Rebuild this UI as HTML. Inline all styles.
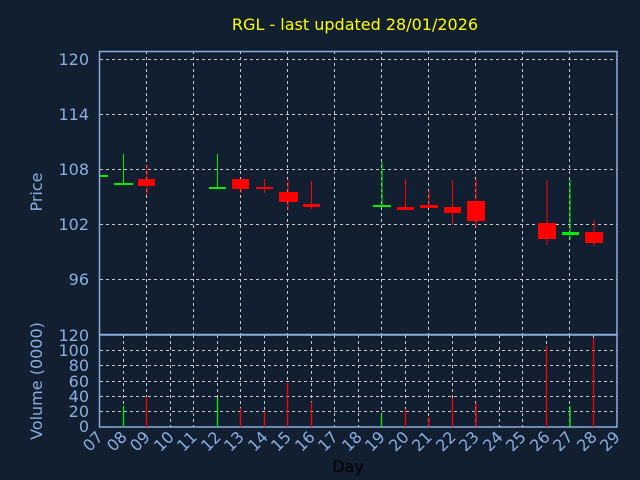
<!DOCTYPE html><html><head><style>html,body{margin:0;padding:0;background:#111f30;overflow:hidden;width:640px;height:480px}svg{display:block}</style></head><body>
<svg width="640" height="480" xmlns="http://www.w3.org/2000/svg" font-family="DejaVu Sans, sans-serif">
<rect width="640" height="480" fill="#111f30"/>
<text x="355" y="30" fill="#ffff00" font-size="16" text-anchor="middle">RGL - last updated 28/01/2026</text>
<g stroke="#c8c8c8" stroke-dasharray="3,3" stroke-width="1">
<line x1="100" x2="617" y1="59.5" y2="59.5"/><line x1="100" x2="617" y1="114.5" y2="114.5"/><line x1="100" x2="617" y1="169.5" y2="169.5"/><line x1="100" x2="617" y1="224.5" y2="224.5"/><line x1="100" x2="617" y1="279.5" y2="279.5"/>
<line x1="146.5" x2="146.5" y1="51" y2="334"/><line x1="193.5" x2="193.5" y1="51" y2="334"/><line x1="240.5" x2="240.5" y1="51" y2="334"/><line x1="287.5" x2="287.5" y1="51" y2="334"/><line x1="334.5" x2="334.5" y1="51" y2="334"/><line x1="381.5" x2="381.5" y1="51" y2="334"/><line x1="428.5" x2="428.5" y1="51" y2="334"/><line x1="475.5" x2="475.5" y1="51" y2="334"/><line x1="522.5" x2="522.5" y1="51" y2="334"/><line x1="569.5" x2="569.5" y1="51" y2="334"/>
<line x1="100" x2="617" y1="350.5" y2="350.5"/><line x1="100" x2="617" y1="365.5" y2="365.5"/><line x1="100" x2="617" y1="381.5" y2="381.5"/><line x1="100" x2="617" y1="396.5" y2="396.5"/><line x1="100" x2="617" y1="411.5" y2="411.5"/>
<line x1="123.5" x2="123.5" y1="335" y2="427"/><line x1="146.5" x2="146.5" y1="335" y2="427"/><line x1="170.5" x2="170.5" y1="335" y2="427"/><line x1="193.5" x2="193.5" y1="335" y2="427"/><line x1="217.5" x2="217.5" y1="335" y2="427"/><line x1="240.5" x2="240.5" y1="335" y2="427"/><line x1="264.5" x2="264.5" y1="335" y2="427"/><line x1="287.5" x2="287.5" y1="335" y2="427"/><line x1="311.5" x2="311.5" y1="335" y2="427"/><line x1="334.5" x2="334.5" y1="335" y2="427"/><line x1="358.5" x2="358.5" y1="335" y2="427"/><line x1="381.5" x2="381.5" y1="335" y2="427"/><line x1="405.5" x2="405.5" y1="335" y2="427"/><line x1="428.5" x2="428.5" y1="335" y2="427"/><line x1="452.5" x2="452.5" y1="335" y2="427"/><line x1="475.5" x2="475.5" y1="335" y2="427"/><line x1="499.5" x2="499.5" y1="335" y2="427"/><line x1="522.5" x2="522.5" y1="335" y2="427"/><line x1="546.5" x2="546.5" y1="335" y2="427"/><line x1="569.5" x2="569.5" y1="335" y2="427"/><line x1="593.5" x2="593.5" y1="335" y2="427"/>
</g>
<g fill="none" stroke="#8aaee0" stroke-width="1.5">
<rect x="99.5" y="51.5" width="517.5" height="283"/>
<rect x="99.5" y="335" width="517.5" height="92"/>
</g>
<g stroke-width="1">
<rect x="100" y="175" width="8" height="2" fill="#00ee00"/>
<line x1="123.5" x2="123.5" y1="154" y2="184" stroke="#00ee00"/><rect x="114" y="183" width="19" height="2" fill="#00ee00"/>
<line x1="147" x2="147" y1="165" y2="195" stroke="#ff0000"/><rect x="138" y="179" width="17" height="7" fill="#ff0000"/>
<line x1="217.5" x2="217.5" y1="154" y2="188" stroke="#00ee00"/><rect x="209" y="187" width="17" height="2" fill="#00ee00"/>
<line x1="241" x2="241" y1="179" y2="193" stroke="#ff0000"/><rect x="232" y="179" width="17" height="10" fill="#ff0000"/>
<line x1="264.5" x2="264.5" y1="179" y2="193" stroke="#ff0000"/><rect x="256" y="187" width="17" height="2" fill="#ff0000"/>
<line x1="288" x2="288" y1="179" y2="210" stroke="#ff0000"/><rect x="279" y="192" width="19" height="10" fill="#ff0000"/>
<line x1="311.5" x2="311.5" y1="181" y2="209" stroke="#ff0000"/><rect x="303" y="204" width="17" height="3" fill="#ff0000"/>
<line x1="382" x2="382" y1="162" y2="206" stroke="#00ee00"/><rect x="373" y="205" width="18" height="2" fill="#00ee00"/>
<line x1="405.5" x2="405.5" y1="179" y2="210" stroke="#ff0000"/><rect x="397" y="207" width="17" height="3" fill="#ff0000"/>
<line x1="429" x2="429" y1="190" y2="208" stroke="#ff0000"/><rect x="420" y="205" width="18" height="3" fill="#ff0000"/>
<line x1="452.5" x2="452.5" y1="180" y2="225" stroke="#ff0000"/><rect x="444" y="207" width="17" height="6" fill="#ff0000"/>
<line x1="476" x2="476" y1="179" y2="227" stroke="#ff0000"/><rect x="467" y="201" width="18" height="20" fill="#ff0000"/>
<line x1="547" x2="547" y1="180" y2="245" stroke="#ff0000"/><rect x="538" y="223" width="18" height="16" fill="#ff0000"/>
<line x1="570" x2="570" y1="180" y2="240" stroke="#00ee00"/><rect x="562" y="232" width="17" height="3" fill="#00ee00"/>
<line x1="594" x2="594" y1="220" y2="246" stroke="#ff0000"/><rect x="585" y="232" width="18" height="11" fill="#ff0000"/>
</g>
<g stroke-width="1.3">
<line x1="123.5" x2="123.5" y1="406" y2="427" stroke="#00ee00"/>
<line x1="146.5" x2="146.5" y1="397" y2="427" stroke="#ff0000"/>
<line x1="217.5" x2="217.5" y1="398" y2="427" stroke="#00ee00"/>
<line x1="240.5" x2="240.5" y1="408" y2="427" stroke="#ff0000"/>
<line x1="264.5" x2="264.5" y1="412" y2="427" stroke="#ff0000"/>
<line x1="287.5" x2="287.5" y1="383" y2="427" stroke="#ff0000"/>
<line x1="311.5" x2="311.5" y1="402" y2="427" stroke="#ff0000"/>
<line x1="381.5" x2="381.5" y1="414" y2="427" stroke="#00ee00"/>
<line x1="405.5" x2="405.5" y1="409" y2="427" stroke="#ff0000"/>
<line x1="429" x2="429" y1="417" y2="427" stroke="#ff0000"/>
<line x1="452.5" x2="452.5" y1="398" y2="427" stroke="#ff0000"/>
<line x1="476" x2="476" y1="403" y2="427" stroke="#ff0000"/>
<line x1="546.5" x2="546.5" y1="346" y2="427" stroke="#ff0000"/>
<line x1="570" x2="570" y1="406" y2="427" stroke="#00ee00"/>
<line x1="593.5" x2="593.5" y1="338" y2="427" stroke="#ff0000"/>
</g>
<g fill="#8aaee0" font-size="16" text-anchor="end">
<text x="89" y="65">120</text><text x="89" y="120">114</text><text x="89" y="175">108</text><text x="89" y="230">102</text><text x="89" y="285">96</text>
<text x="89" y="341">120</text><text x="89" y="356">100</text><text x="89" y="371">80</text><text x="89" y="387">60</text><text x="89" y="402">40</text><text x="89" y="417">20</text><text x="89" y="432">0</text>
</g>
<text transform="translate(42,192) rotate(-90)" fill="#8aaee0" font-size="16" text-anchor="middle">Price</text>
<text transform="translate(42,381) rotate(-90)" fill="#8aaee0" font-size="16" text-anchor="middle">Volume (0000)</text>
<text x="348" y="472" fill="#000" font-size="16" text-anchor="middle">Day</text>
<g fill="#8aaee0" font-size="16" text-anchor="end">
<text transform="translate(104,438) rotate(-45)">07</text><text transform="translate(128,438) rotate(-45)">08</text><text transform="translate(151,438) rotate(-45)">09</text><text transform="translate(175,438) rotate(-45)">10</text><text transform="translate(198,438) rotate(-45)">11</text><text transform="translate(222,438) rotate(-45)">12</text><text transform="translate(245,438) rotate(-45)">13</text><text transform="translate(269,438) rotate(-45)">14</text><text transform="translate(292,438) rotate(-45)">15</text><text transform="translate(316,438) rotate(-45)">16</text><text transform="translate(339,438) rotate(-45)">17</text><text transform="translate(363,438) rotate(-45)">18</text><text transform="translate(386,438) rotate(-45)">19</text><text transform="translate(410,438) rotate(-45)">20</text><text transform="translate(433,438) rotate(-45)">21</text><text transform="translate(457,438) rotate(-45)">22</text><text transform="translate(480,438) rotate(-45)">23</text><text transform="translate(504,438) rotate(-45)">24</text><text transform="translate(527,438) rotate(-45)">25</text><text transform="translate(551,438) rotate(-45)">26</text><text transform="translate(574,438) rotate(-45)">27</text><text transform="translate(598,438) rotate(-45)">28</text><text transform="translate(621,438) rotate(-45)">29</text>
</g>
</svg>
</body></html>
